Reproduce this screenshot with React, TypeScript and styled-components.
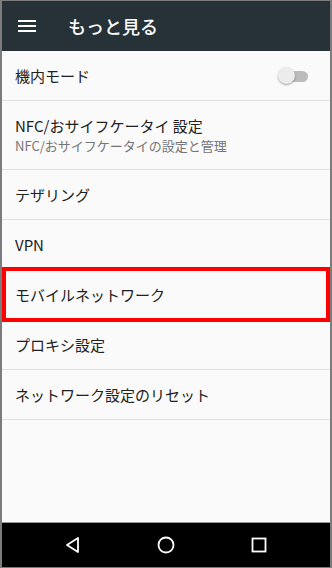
import styled, { createGlobalStyle } from "styled-components";

const GlobalStyle = createGlobalStyle`
  html, body {
    margin: 0;
    padding: 0;
  }
  body {
    font-family: "Noto Sans CJK JP", "Noto Sans", Roboto, sans-serif;
    background: #fafafa;
  }
`;

const Screen = styled.div`
  box-sizing: border-box;
  width: 332px;
  height: 568px;
  display: flex;
  flex-direction: column;
  border-style: solid;
  border-color: #7c7c7c;
  border-width: 1px 2px 1px 2px;
  background: #fafafa;
  overflow: hidden;
`;

const AppBar = styled.header`
  height: 50px;
  flex: none;
  display: flex;
  align-items: center;
  background: #263238;
  color: #ffffff;
  padding-left: 15px;
  gap: 31px;
`;

const Title = styled.h1`
  margin: 0;
  font-size: 18px;
  font-weight: 500;
  letter-spacing: 0;
`;

const List = styled.main`
  flex: 1;
  display: flex;
  flex-direction: column;
`;

const Row = styled.div<{ tall?: boolean; highlight?: boolean }>`
  position: relative;
  box-sizing: border-box;
  height: ${(p) => (p.tall ? "69px" : "50px")};
  display: flex;
  align-items: center;
  justify-content: space-between;
  padding: 0 22px 0 13px;
  border-bottom: 1px solid #e2e2e2;

  ${(p) =>
    p.highlight &&
    `
    &::after {
      content: "";
      position: absolute;
      left: 0;
      right: 0;
      top: -3px;
      bottom: -3px;
      border: 4px solid #ff0000;
      pointer-events: none;
    }
  `}
`;

const Texts = styled.div`
  display: flex;
  flex-direction: column;
  gap: 1px;
`;

const Label = styled.span`
  font-size: 15px;
  color: #212121;
  line-height: 20px;
`;

const Sub = styled.span`
  font-size: 13px;
  color: #757575;
  line-height: 17px;
`;

const Switch = styled.div`
  position: relative;
  width: 30px;
  height: 18px;
`;

const Track = styled.div`
  position: absolute;
  left: 6px;
  right: 0;
  top: 4px;
  height: 11px;
  border-radius: 6px;
  background: #bcbcbc;
`;

const Thumb = styled.div`
  position: absolute;
  left: 0;
  top: 0;
  width: 17px;
  height: 17px;
  border-radius: 50%;
  background: #ececec;
  box-shadow: 0 1px 2px rgba(0, 0, 0, 0.35);
`;

const NavBar = styled.nav`
  height: 44px;
  flex: none;
  background: #000000;
  border-top: 1px solid #9a9a9a;
  display: grid;
  grid-template-columns: repeat(3, 1fr);
  align-items: center;
  justify-items: center;
  padding: 0 24px;
`;

const Menu = () => (
  <svg width="20" height="14" viewBox="0 0 20 14">
    <rect x="1" y="1" width="18" height="2" fill="#fff" />
    <rect x="1" y="6" width="18" height="2" fill="#fff" />
    <rect x="1" y="11" width="18" height="2" fill="#fff" />
  </svg>
);

const Back = () => (
  <svg width="18" height="18" viewBox="0 0 18 18">
    <path d="M14 2 L3 9 L14 16 Z" fill="none" stroke="#fff" strokeWidth="1.8" strokeLinejoin="round" />
  </svg>
);

const Home = () => (
  <svg width="18" height="18" viewBox="0 0 18 18">
    <circle cx="9" cy="9" r="7.5" fill="none" stroke="#fff" strokeWidth="1.8" />
  </svg>
);

const Recent = () => (
  <svg width="18" height="18" viewBox="0 0 18 18">
    <rect x="2.5" y="2.5" width="13" height="13" fill="none" stroke="#fff" strokeWidth="1.8" />
  </svg>
);

export default function App() {
  return (
    <>
      <GlobalStyle />
      <Screen>
        <AppBar>
          <Menu />
          <Title>もっと見る</Title>
        </AppBar>
        <List>
          <Row>
            <Label>機内モード</Label>
            <Switch>
              <Track />
              <Thumb />
            </Switch>
          </Row>
          <Row tall>
            <Texts>
              <Label>NFC/おサイフケータイ 設定</Label>
              <Sub>NFC/おサイフケータイの設定と管理</Sub>
            </Texts>
          </Row>
          <Row>
            <Label>テザリング</Label>
          </Row>
          <Row>
            <Label>VPN</Label>
          </Row>
          <Row highlight>
            <Label>モバイルネットワーク</Label>
          </Row>
          <Row>
            <Label>プロキシ設定</Label>
          </Row>
          <Row>
            <Label>ネットワーク設定のリセット</Label>
          </Row>
        </List>
        <NavBar>
          <Back />
          <Home />
          <Recent />
        </NavBar>
      </Screen>
    </>
  );
}
